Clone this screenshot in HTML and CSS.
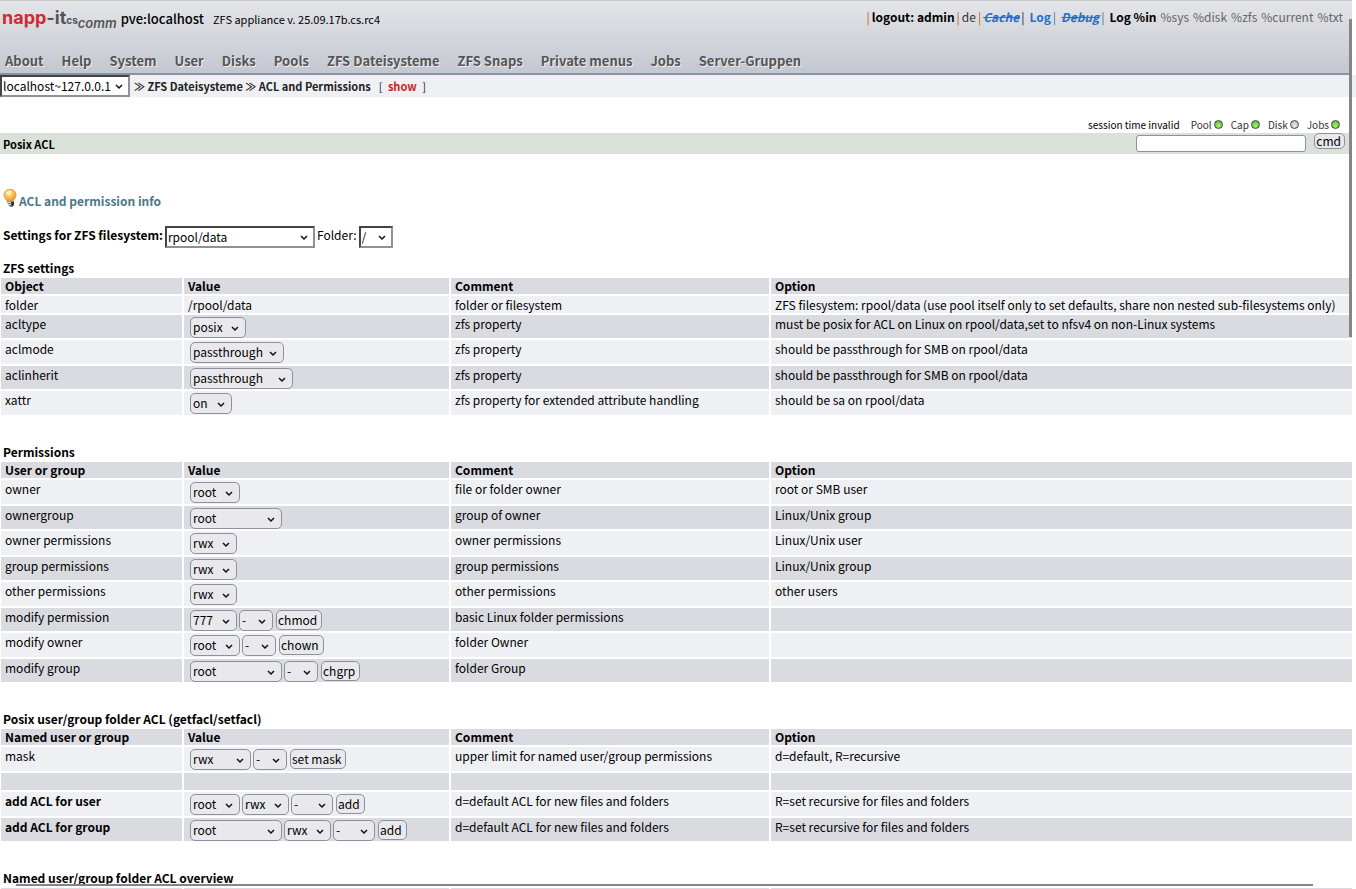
FILE: index.html
```html
<!DOCTYPE html>
<html lang="en">
<head>
<meta charset="utf-8">
<title>napp-it cs – ACL and Permissions</title>
<link rel="stylesheet" href="styles.css">
</head>
<body>
<header class="top">
  <div class="top-row">
    <div class="brand">
      <a class="logo" href="#"><span class="logo-red">napp</span><span class="logo-it">-it</span><span class="logo-cs">cs</span><span class="logo-comm">comm</span></a>
      <span class="host">pve:localhost</span>
      <span class="version">ZFS appliance v. 25.09.17b.cs.rc4</span>
    </div>
    <nav class="session" aria-label="Session">
      <i>|</i><a class="strong" href="#">logout: admin</a><i>|</i><a class="lang" href="#">de</a><i>|</i><a class="blue off" href="#">Cache</a><i class="dark">|</i><a class="blue log" href="#">Log</a><i class="teal">|</i><a class="blue off dbg" href="#">Debug</a><i class="teal">|</i><a class="strong in" href="#">Log %in</a><a class="pct" href="#">%sys</a><a class="pct" href="#">%disk</a><a class="pct" href="#">%zfs</a><a class="pct" href="#">%current</a><a class="pct" href="#">%txt</a>
    </nav>
  </div>
  <nav class="menu" aria-label="Main">
    <a href="#">About</a><a href="#">Help</a><a href="#">System</a><a href="#">User</a><a href="#">Disks</a><a href="#">Pools</a><a href="#">ZFS Dateisysteme</a><a href="#">ZFS Snaps</a><a href="#">Private menus</a><a href="#">Jobs</a><a href="#">Server-Gruppen</a>
  </nav>
</header>
<div class="crumbs">
  <select class="inset w-host" aria-label="Host"><option>localhost~127.0.0.1</option></select>
  <span class="path">≫ ZFS Dateisysteme ≫ ACL and Permissions</span>
  <span class="show">[ <a href="#">show</a> ]</span>
</div>
<div class="status">
  <span class="invalid">session time invalid</span>
  <span>Pool<b class="led"></b></span><span>Cap<b class="led"></b></span><span>Disk<b class="led led-off"></b></span><span>Jobs<b class="led"></b></span>
</div>
<div class="titlebar">
  <h1>Posix ACL</h1>
  <form class="cmd"><input type="text" aria-label="Command"><button type="button">cmd</button></form>
</div>
<main>
  <a class="info" href="#">
    <svg width="16" height="20" viewBox="0 0 16 20" aria-hidden="true">
      <defs><radialGradient id="glow" cx="40%" cy="35%" r="65%"><stop offset="0" stop-color="#fff3c4"/><stop offset=".5" stop-color="#fbc65c"/><stop offset="1" stop-color="#e8962c"/></radialGradient></defs>
      <path d="M4 12h7v3l-1 2-2 1-2-1-1-2z" fill="#6d6d78"/>
      <path d="M5 13h3v1H5zM5 15h3v1H5z" fill="#e6e6ea"/>
      <path d="M8 13h3v3l-2 2z" fill="#33333d"/>
      <path d="M7 0a6 6 0 0 1 6 6c0 3-2 4-3 6H4C3 10 1 9 1 6a6 6 0 0 1 6-6z" fill="url(#glow)" stroke="#e3a04a"/>
      <path d="M3 5q2-3 5-2" stroke="#fff" fill="none"/>
    </svg>
    <span>ACL and permission info</span>
  </a>
  <form class="pick">
    <label class="bold" for="fs">Settings for ZFS filesystem:</label>
    <select class="inset w-fs" id="fs"><option>rpool/data</option></select>
    <label for="dir">Folder:</label>
    <select class="inset w-dir" id="dir"><option>/</option></select>
  </form>

  <section>
    <h2>ZFS settings</h2>
    <table>
      <colgroup><col class="c1"><col class="c2"><col class="c3"><col></colgroup>
      <thead><tr><th>Object</th><th>Value</th><th>Comment</th><th>Option</th></tr></thead>
      <tbody>
        <tr class="short"><td>folder</td><td>/rpool/data</td><td>folder or filesystem</td><td>ZFS filesystem: rpool/data (use pool itself only to set defaults, share non nested sub-filesystems only)</td></tr>
        <tr><td>acltype</td><td><div class="ctl"><select class="w56" aria-label="acltype"><option>posix</option></select></div></td><td>zfs property</td><td>must be posix for ACL on Linux on rpool/data,set to nfsv4 on non-Linux systems</td></tr>
        <tr><td>aclmode</td><td><div class="ctl"><select class="w94" aria-label="aclmode"><option>passthrough</option></select></div></td><td>zfs property</td><td>should be passthrough for SMB on rpool/data</td></tr>
        <tr><td>aclinherit</td><td><div class="ctl"><select class="w103" aria-label="aclinherit"><option>passthrough</option></select></div></td><td>zfs property</td><td>should be passthrough for SMB on rpool/data</td></tr>
        <tr><td>xattr</td><td><div class="ctl"><select class="w42" aria-label="xattr"><option>on</option></select></div></td><td>zfs property for extended attribute handling</td><td>should be sa on rpool/data</td></tr>
      </tbody>
    </table>
  </section>

  <section>
    <h2>Permissions</h2>
    <table>
      <colgroup><col class="c1"><col class="c2"><col class="c3"><col></colgroup>
      <thead><tr><th>User or group</th><th>Value</th><th>Comment</th><th>Option</th></tr></thead>
      <tbody>
        <tr><td>owner</td><td><div class="ctl"><select class="w50" aria-label="owner"><option>root</option></select></div></td><td>file or folder owner</td><td>root or SMB user</td></tr>
        <tr><td>ownergroup</td><td><div class="ctl"><select class="w92" aria-label="ownergroup"><option>root</option></select></div></td><td>group of owner</td><td>Linux/Unix group</td></tr>
        <tr><td>owner permissions</td><td><div class="ctl"><select class="w47" aria-label="owner permissions"><option>rwx</option></select></div></td><td>owner permissions</td><td>Linux/Unix user</td></tr>
        <tr><td>group permissions</td><td><div class="ctl"><select class="w47" aria-label="group permissions"><option>rwx</option></select></div></td><td>group permissions</td><td>Linux/Unix group</td></tr>
        <tr><td>other permissions</td><td><div class="ctl"><select class="w47" aria-label="other permissions"><option>rwx</option></select></div></td><td>other permissions</td><td>other users</td></tr>
        <tr><td>modify permission</td><td><div class="ctl"><select class="w47" aria-label="mode"><option>777</option></select><select class="w34" aria-label="mode flag"><option>-</option></select><button type="button">chmod</button></div></td><td>basic Linux folder permissions</td><td></td></tr>
        <tr><td>modify owner</td><td><div class="ctl"><select class="w50" aria-label="new owner"><option>root</option></select><select class="w34" aria-label="owner flag"><option>-</option></select><button type="button">chown</button></div></td><td>folder Owner</td><td></td></tr>
        <tr><td>modify group</td><td><div class="ctl"><select class="w92" aria-label="new group"><option>root</option></select><select class="w34" aria-label="group flag"><option>-</option></select><button type="button">chgrp</button></div></td><td>folder Group</td><td></td></tr>
      </tbody>
    </table>
  </section>

  <section>
    <h2>Posix user/group folder ACL (getfacl/setfacl)</h2>
    <table>
      <colgroup><col class="c1"><col class="c2"><col class="c3"><col></colgroup>
      <thead><tr><th>Named user or group</th><th>Value</th><th>Comment</th><th>Option</th></tr></thead>
      <tbody>
        <tr><td>mask</td><td><div class="ctl"><select class="w61" aria-label="mask"><option>rwx</option></select><select class="w34" aria-label="mask flag"><option>-</option></select><button type="button">set mask</button></div></td><td>upper limit for named user/group permissions</td><td>d=default, R=recursive</td></tr>
        <tr class="short"><td></td><td></td><td></td><td></td></tr>
        <tr><td class="bold">add ACL for user</td><td><div class="ctl"><select class="w50" aria-label="user"><option>root</option></select><select class="w47" aria-label="user rights"><option>rwx</option></select><select class="w42" aria-label="user flag"><option>-</option></select><button type="button">add</button></div></td><td>d=default ACL for new files and folders</td><td>R=set recursive for files and folders</td></tr>
        <tr><td class="bold">add ACL for group</td><td><div class="ctl"><select class="w92" aria-label="group"><option>root</option></select><select class="w47" aria-label="group rights"><option>rwx</option></select><select class="w42" aria-label="group flag"><option>-</option></select><button type="button">add</button></div></td><td>d=default ACL for new files and folders</td><td>R=set recursive for files and folders</td></tr>
      </tbody>
    </table>
  </section>

  <section>
    <h2>Named user/group folder ACL overview</h2>
    <table>
      <colgroup><col class="c1"><col class="c2"><col class="c3"><col></colgroup>
      <thead><tr><th></th><th></th><th></th><th></th></tr></thead>
    </table>
  </section>
</main>
<div class="thumb-v"></div>
<div class="thumb-h"></div>
</body>
</html>
```
FILE: styles.css
```css
* { box-sizing: border-box; }
html, body { height: 100%; }
body {
  margin: 0;
  overflow: hidden;
  background: #fff;
  color: #000;
  font: 12px/18px "Noto Sans CJK SC", "Noto Sans", sans-serif;
}
a { color: inherit; text-decoration: none; }
h1, h2 { margin: 0; font-size: 12px; line-height: 16px; }
.bold { font-weight: bold; }

/* header */
.top {
  height: 75px;
  margin-right: 4px;
  padding-top: 6px;
  border-top: 1px solid #c8c8c8;
  border-bottom: 2px solid #8492a6;
  background: linear-gradient(#e4e5e9, #c3c7d0);
}
.top-row { display: flex; justify-content: space-between; align-items: flex-start; height: 42px; }
.brand { display: flex; align-items: baseline; padding-left: 2px; }
.logo { margin-right: 4px; font: bold 18px/22px "Inter", sans-serif; color: #555; }
.logo-red { color: #cc2c30; }
.logo-cs { font-size: 10px; }
.logo-comm { font-size: 13px; font-weight: 600; font-style: italic; vertical-align: -4px; }
.host { margin-right: 9px; font-size: 13px; font-weight: 500; }
.version { font-size: 11px; }
.session { display: flex; padding: 1px 9px 0 0; color: #333; }
.session i { font-style: normal; color: #c06010; margin: 0 2px; }
.session i.dark { color: #223; }
.session i.teal { color: #2a7fa0; }
.strong { font-weight: bold; color: #000; }
.blue { font-weight: bold; color: #2470cc; }
.off { font-style: italic; text-decoration: line-through; }
.log, .dbg, .in { margin-left: 3px; }
.pct { margin-left: 4px; color: #666; }
.menu { display: flex; gap: 18px; padding-left: 5px; font-size: 13px; line-height: 24px; font-weight: bold; color: #555; text-shadow: 1px 1px 0 #eee; }

/* breadcrumb */
.crumbs { display: flex; align-items: flex-start; height: 22px; background: #eff0f4; font-size: 11px; line-height: 22px; color: #222; }
.crumbs select { font-size: 12px; }
.path { margin-left: 4px; font-weight: bold; }
.show { margin-left: 8px; }
.show a { margin: 0 3px; font-weight: bold; color: #c8281e; }

/* status line and title */
.status { display: flex; justify-content: flex-end; align-items: flex-end; gap: 8px; height: 36px; padding: 0 16px 1px 0; font-size: 10px; line-height: 14px; color: #333; }
.invalid { margin-right: 3px; color: #000; }
.led {
  display: inline-block;
  width: 9px;
  height: 9px;
  margin-left: 2px;
  border: 1px solid #444;
  border-radius: 50%;
  background: radial-gradient(circle at 50% 70%, #a8f070, #4db81c);
}
.led-off { background: radial-gradient(circle at 50% 70%, #eee, #aaa); }
.titlebar { display: flex; justify-content: space-between; height: 21px; margin-right: 4px; padding-left: 3px; background: #dae1d9; }
.titlebar h1 { font-size: 11px; line-height: 22px; }
.cmd { display: flex; gap: 8px; align-items: flex-start; padding-right: 7px; }
.cmd input { width: 170px; height: 17px; margin-top: 2px; border: 1px solid #8f8f9d; border-radius: 3px; }
.cmd button { height: 16px; padding: 0 3px 0 1px; line-height: 14px; }

/* content */
main { padding: 35px 2px 0 0; }
.info { display: flex; align-items: flex-start; padding-left: 3px; color: #4c7886; font-weight: bold; }
.info span { padding-top: 3px; }
.pick { display: flex; gap: 2px; padding: 16px 0 12px 3px; }
select, button {
  height: 21px;
  margin: 0;
  padding: 0 2px;
  border: 1px solid #8f8f9d;
  border-radius: 5px;
  background-color: #e9e9ed;
  color: #000;
  font: inherit;
  line-height: 18px;
}
select {
  appearance: none;
  background-image: url("data:image/svg+xml,%3Csvg xmlns='http://www.w3.org/2000/svg' width='8' height='6'%3E%3Cpath d='M1 1l3 3 3-3' fill='none' stroke='%23111' stroke-width='1.5'/%3E%3C/svg%3E");
  background-repeat: no-repeat;
  background-position: right 6px top 8px;
}
.inset { height: 22px; padding: 0 1px 1px; border: 2px inset #8f8f9d; border-radius: 0; background-color: #fff; background-position: right 5px top 7px; }
section { margin-bottom: 27px; }
section h2 { padding-left: 3px; }
table { width: calc(100% + 1px); table-layout: fixed; border-collapse: separate; border-spacing: 2px; margin-left: -1px; }
.c1 { width: 181px; }
.c2 { width: 265px; }
.c3 { width: 318px; }
th, td { padding: 0 4px; vertical-align: top; text-align: left; background: #dadbe1; }
th { height: 16px; line-height: 16px; }
td { height: 23px; line-height: 17px; }
tbody tr:nth-child(odd) td { background: #eff0f4; height: 24px; }
tbody tr.short td { height: 17px; }
tbody tr.short:nth-child(even) td { background: #dadbe1; }
.ctl { display: flex; gap: 2px; align-items: flex-start; padding: 2px 0 0 2px; }
.ctl select { padding-bottom: 1px; }
.ctl button { height: 20px; margin-left: 1px; padding: 0 4px 0 1px; line-height: 16px; }
.w34 { width: 34px; }
.w42 { width: 42px; }
.w47 { width: 47px; }
.w50 { width: 50px; }
.w56 { width: 56px; }
.w61 { width: 61px; }
.w92 { width: 92px; }
.w94 { width: 94px; }
.w103 { width: 103px; }
.w-host { width: 130px; }
.w-fs { width: 150px; }
.w-dir { width: 34px; }

/* overlay scroll thumbs */
.thumb-v { position: fixed; right: 4px; top: 19px; width: 3px; height: 318px; background: #858585; }
.thumb-h { position: fixed; left: 16px; right: 43px; bottom: 3px; height: 2px; background: #858585; }
```
